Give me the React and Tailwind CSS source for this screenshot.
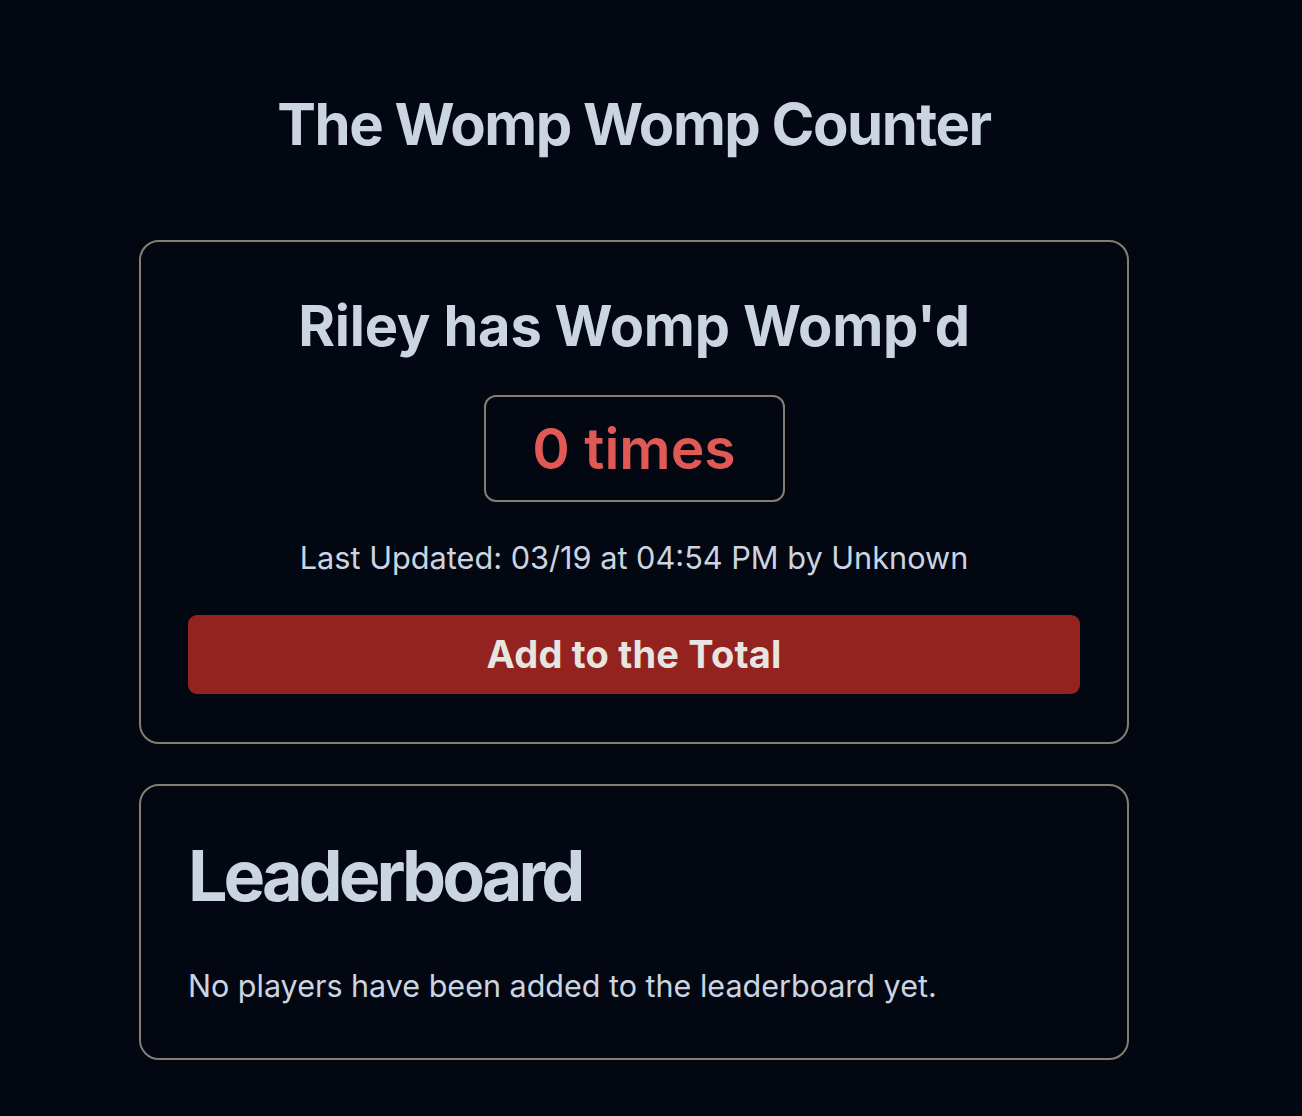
import React, { useState } from "react";

export default function App() {
  const [count, setCount] = useState(0);

  return (
    <div className="min-h-screen bg-[#030712] text-[#cbd5e1] font-['Inter','Noto_Sans',sans-serif]">
      <div className="w-[990px] ml-[139px] pt-[95px] pb-[57px]">
        <h1 className="text-center text-[58px] leading-none font-bold tracking-[-1.5px]">
          The Womp Womp Counter
        </h1>

        <div className="mt-[87px] border-2 border-[#847d72] rounded-[20px] px-[47px] pt-[56px] pb-[48px] flex flex-col items-center">
          <h2 className="text-[56px] leading-none font-bold tracking-[-0.2px]">
            Riley has Womp Womp'd
          </h2>
          <div className="mt-[41px] w-[301px] h-[107px] border-2 border-[#847d72] rounded-[12px] flex items-center justify-center">
            <span className="text-[57px] leading-none font-semibold text-[#e05955]">
              {count} times
            </span>
          </div>
          <p className="mt-[41px] text-[30.7px] leading-none">
            Last Updated: 03/19 at 04:54 PM by Unknown
          </p>
          <button
            onClick={() => setCount(count + 1)}
            className="mt-[41px] w-full h-[79px] rounded-[9px] bg-[#94231f] text-[#e7e5e2] text-[38px] font-bold tracking-[0.2px]"
          >
            Add to the Total
          </button>
        </div>

        <div className="mt-[40px] border-2 border-[#847d72] rounded-[20px] px-[47px] pt-[55px] pb-[57px]">
          <h2 className="text-[70px] leading-none font-bold tracking-[-4px]">Leaderboard</h2>
          <p className="mt-[60px] text-[30.5px] leading-none">
            No players have been added to the leaderboard yet.
          </p>
        </div>
      </div>
    </div>
  );
}
